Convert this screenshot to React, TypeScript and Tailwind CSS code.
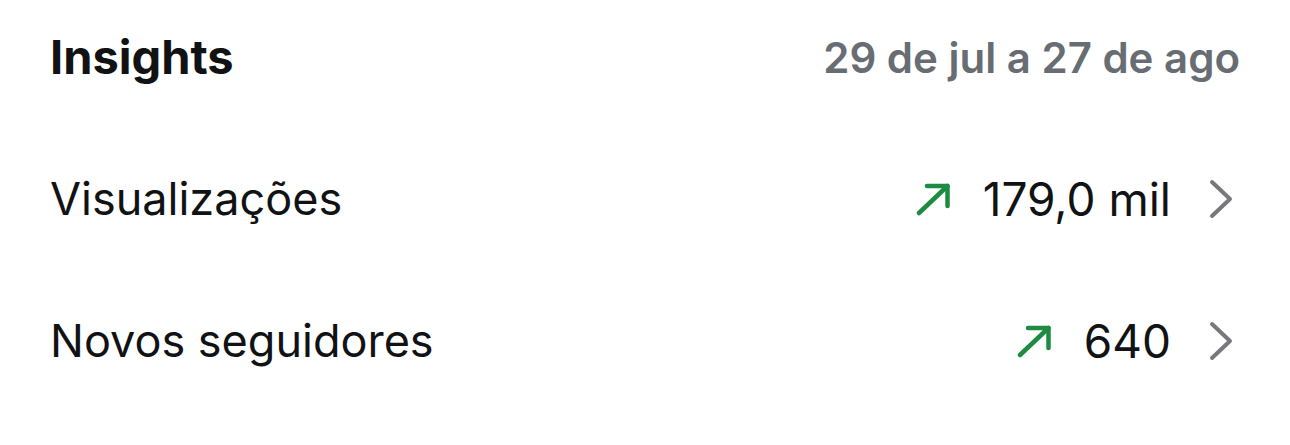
import React from "react";

function UpArrow() {
  return (
    <svg width="35" height="33" viewBox="0 0 35 33" fill="none" className="shrink-0">
      <path d="M3 30 L31.5 3" stroke="#1e8b43" strokeWidth="4.5" strokeLinecap="round" />
      <path d="M11 3 H31.5 V23" stroke="#1e8b43" strokeWidth="4.5" strokeLinecap="round" strokeLinejoin="round" />
    </svg>
  );
}

function Chevron() {
  return (
    <svg width="24" height="40" viewBox="0 0 24 40" fill="none" className="shrink-0">
      <path d="M3 3 L21 20 L3 37" stroke="#77787e" strokeWidth="4" strokeLinecap="round" strokeLinejoin="round" />
    </svg>
  );
}

function Row({ label, value }: { label: string; value: string }) {
  return (
    <div className="flex h-[142px] items-center justify-between pr-[7px]">
      <span className="text-[45px] text-[#101214]">{label}</span>
      <div className="flex items-center">
        <UpArrow />
        <span className="ml-[32px] text-[46px] text-[#101214]">{value}</span>
        <span className="ml-[38px]"><Chevron /></span>
      </div>
    </div>
  );
}

export default function App() {
  return (
    <div
      className="w-[1290px] h-[445px] bg-white pl-[50px] pr-[50px] overflow-hidden"
      style={{ fontFamily: "Inter, 'Noto Sans', sans-serif" }}
    >
      <div className="flex h-[114px] items-center justify-between">
        <span className="text-[47px] font-bold text-[#101214]">Insights</span>
        <span className="text-[42px] font-semibold text-[#686c73]">29 de jul a 27 de ago</span>
      </div>
      <div className="h-[14px]" />
      <Row label="Visualizações" value="179,0 mil" />
      <Row label="Novos seguidores" value="640" />
    </div>
  );
}
